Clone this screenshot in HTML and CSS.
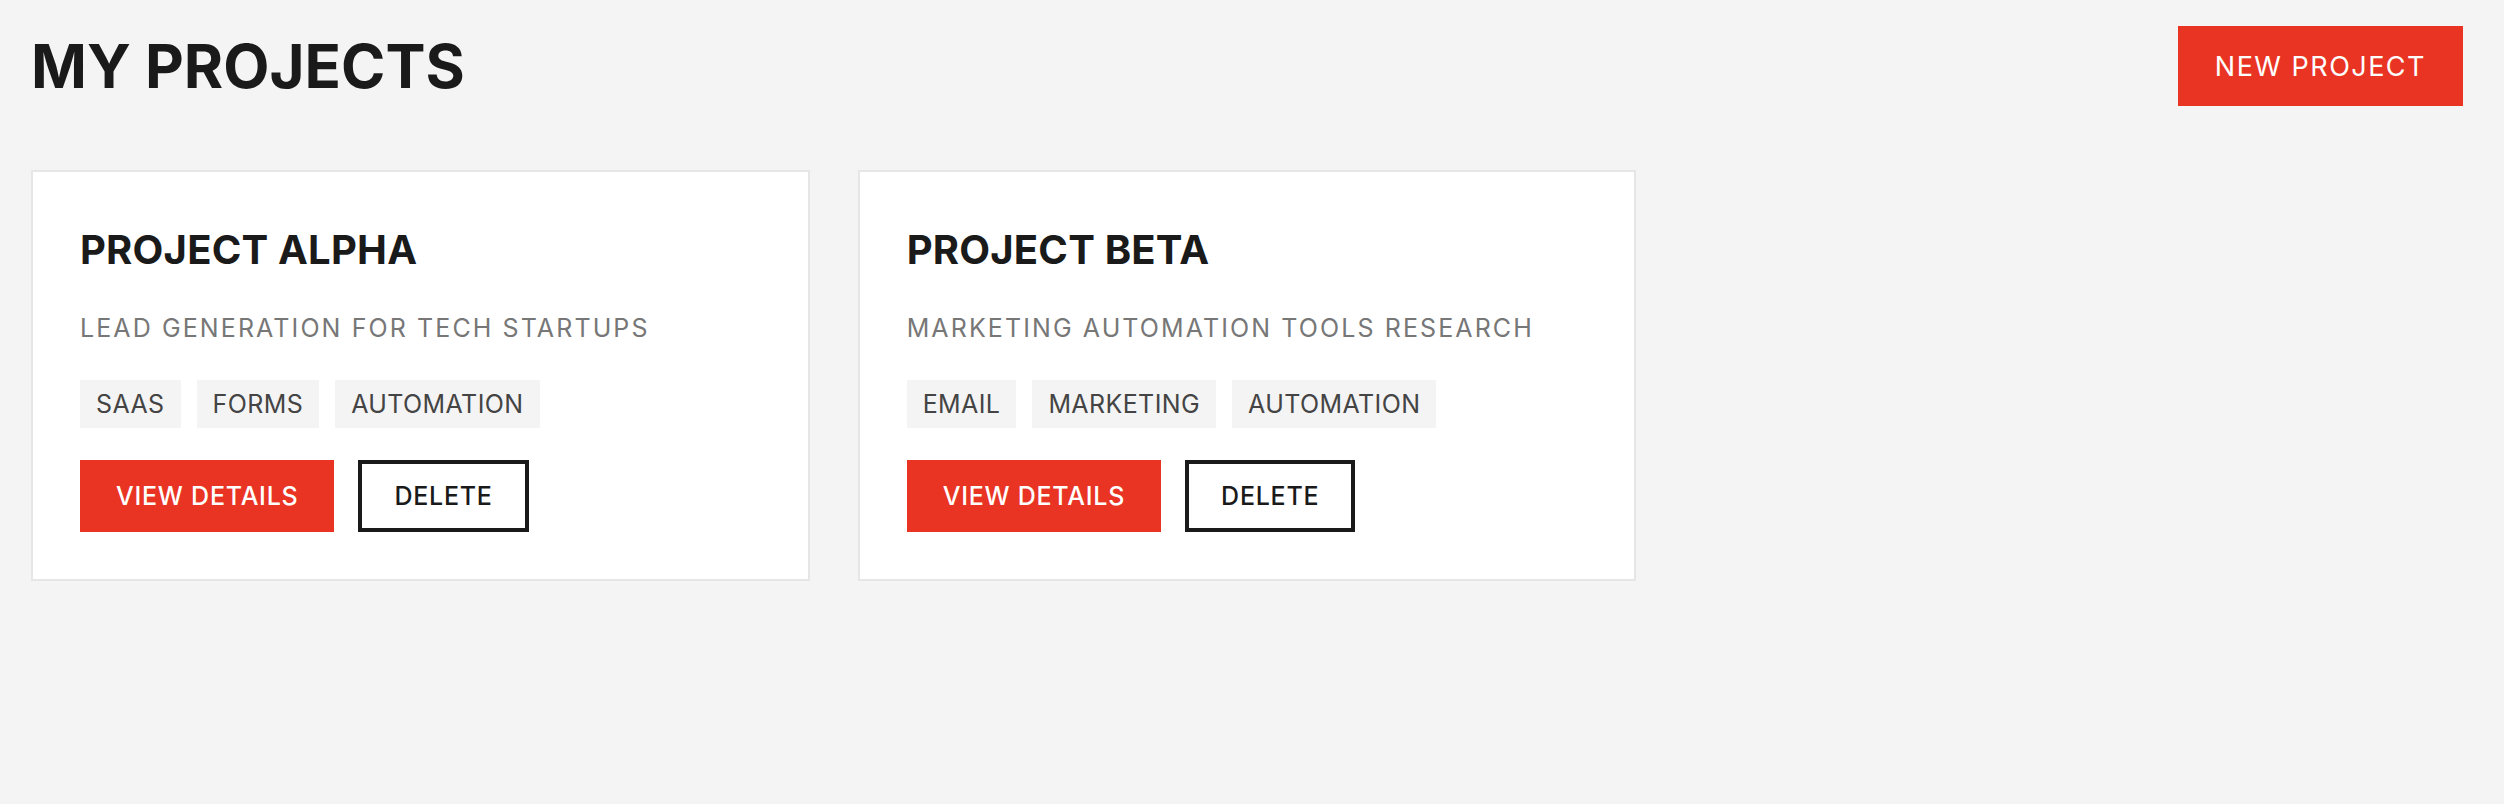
FILE: index.html
```html
<!DOCTYPE html>
<html lang="en">
<head>
<meta charset="utf-8">
<title>My Projects</title>
<link rel="stylesheet" href="styles.css">
</head>
<body>
<div class="page">
  <header class="page-header">
    <h1 class="page-title">MY PROJECTS</h1>
    <button class="btn btn-primary btn-new">NEW PROJECT</button>
  </header>
  <main class="project-grid">
    <article class="card">
      <h2 class="card-title">PROJECT ALPHA</h2>
      <p class="card-desc">LEAD GENERATION FOR TECH STARTUPS</p>
      <div class="tags">
        <span class="tag">SAAS</span>
        <span class="tag">FORMS</span>
        <span class="tag">AUTOMATION</span>
      </div>
      <div class="actions">
        <button class="btn btn-primary">VIEW DETAILS</button>
        <button class="btn btn-outline">DELETE</button>
      </div>
    </article>
    <article class="card">
      <h2 class="card-title">PROJECT BETA</h2>
      <p class="card-desc">MARKETING AUTOMATION TOOLS RESEARCH</p>
      <div class="tags">
        <span class="tag">EMAIL</span>
        <span class="tag">MARKETING</span>
        <span class="tag">AUTOMATION</span>
      </div>
      <div class="actions">
        <button class="btn btn-primary">VIEW DETAILS</button>
        <button class="btn btn-outline">DELETE</button>
      </div>
    </article>
  </main>
</div>
</body>
</html>
```

FILE: styles.css
```css
* { box-sizing: border-box; }

html, body {
  margin: 0;
  padding: 0;
}

body {
  background: #f4f4f4;
  font-family: Inter, "Liberation Sans", sans-serif;
  color: #1a1a1a;
}

.page {
  padding: 26px 41px 32px 31px;
}

.page-header {
  display: flex;
  justify-content: space-between;
  align-items: center;
  height: 80px;
}

.page-title {
  margin: 0;
  font-size: 60px;
  font-weight: 700;
  line-height: 1.2;
  letter-spacing: 0;
  color: #1a1a1a;
}

.btn {
  font-family: Inter, "Liberation Sans", sans-serif;
  font-weight: 500;
  border: none;
  cursor: pointer;
  letter-spacing: 0.03em;
  display: inline-flex;
  align-items: center;
  justify-content: center;
}

.btn-primary {
  background: #e93424;
  color: #ffffff;
}

.btn-new {
  height: 80px;
  padding: 0 37px;
  font-size: 27px;
  font-weight: 400;
  letter-spacing: 0.055em;
}

.project-grid {
  margin-top: 64px;
  display: grid;
  grid-template-columns: repeat(3, 1fr);
  gap: 48px;
  align-items: start;
}

.card {
  background: #ffffff;
  border: 2px solid #e6e6e6;
  padding: 48px 46px 47px 47px;
  display: flex;
  flex-direction: column;
}

.card-title {
  margin: 0 0 30px 0;
  font-size: 40px;
  font-weight: 700;
  line-height: 60px;
  letter-spacing: 0.2px;
  color: #1a1a1a;
}

.card-desc {
  margin: 0 0 33px 0;
  font-size: 25px;
  font-weight: 400;
  line-height: 37px;
  letter-spacing: 2.1px;
  color: #777777;
}

.tags {
  display: flex;
  flex-wrap: wrap;
  gap: 16px;
  margin-bottom: 32px;
}

.tag {
  background: #f4f4f4;
  color: #444444;
  font-size: 25px;
  line-height: 38px;
  padding: 5px 16px;
  letter-spacing: 0.4px;
}

.actions {
  display: flex;
  gap: 24px;
}

.actions .btn {
  height: 72px;
  font-size: 25px;
  padding: 0 36px;
}

.btn-outline {
  background: #ffffff;
  color: #1a1a1a;
  border: 4.5px solid #1a1a1a;
}

.actions .btn-outline {
  padding: 0 32px;
}
```
